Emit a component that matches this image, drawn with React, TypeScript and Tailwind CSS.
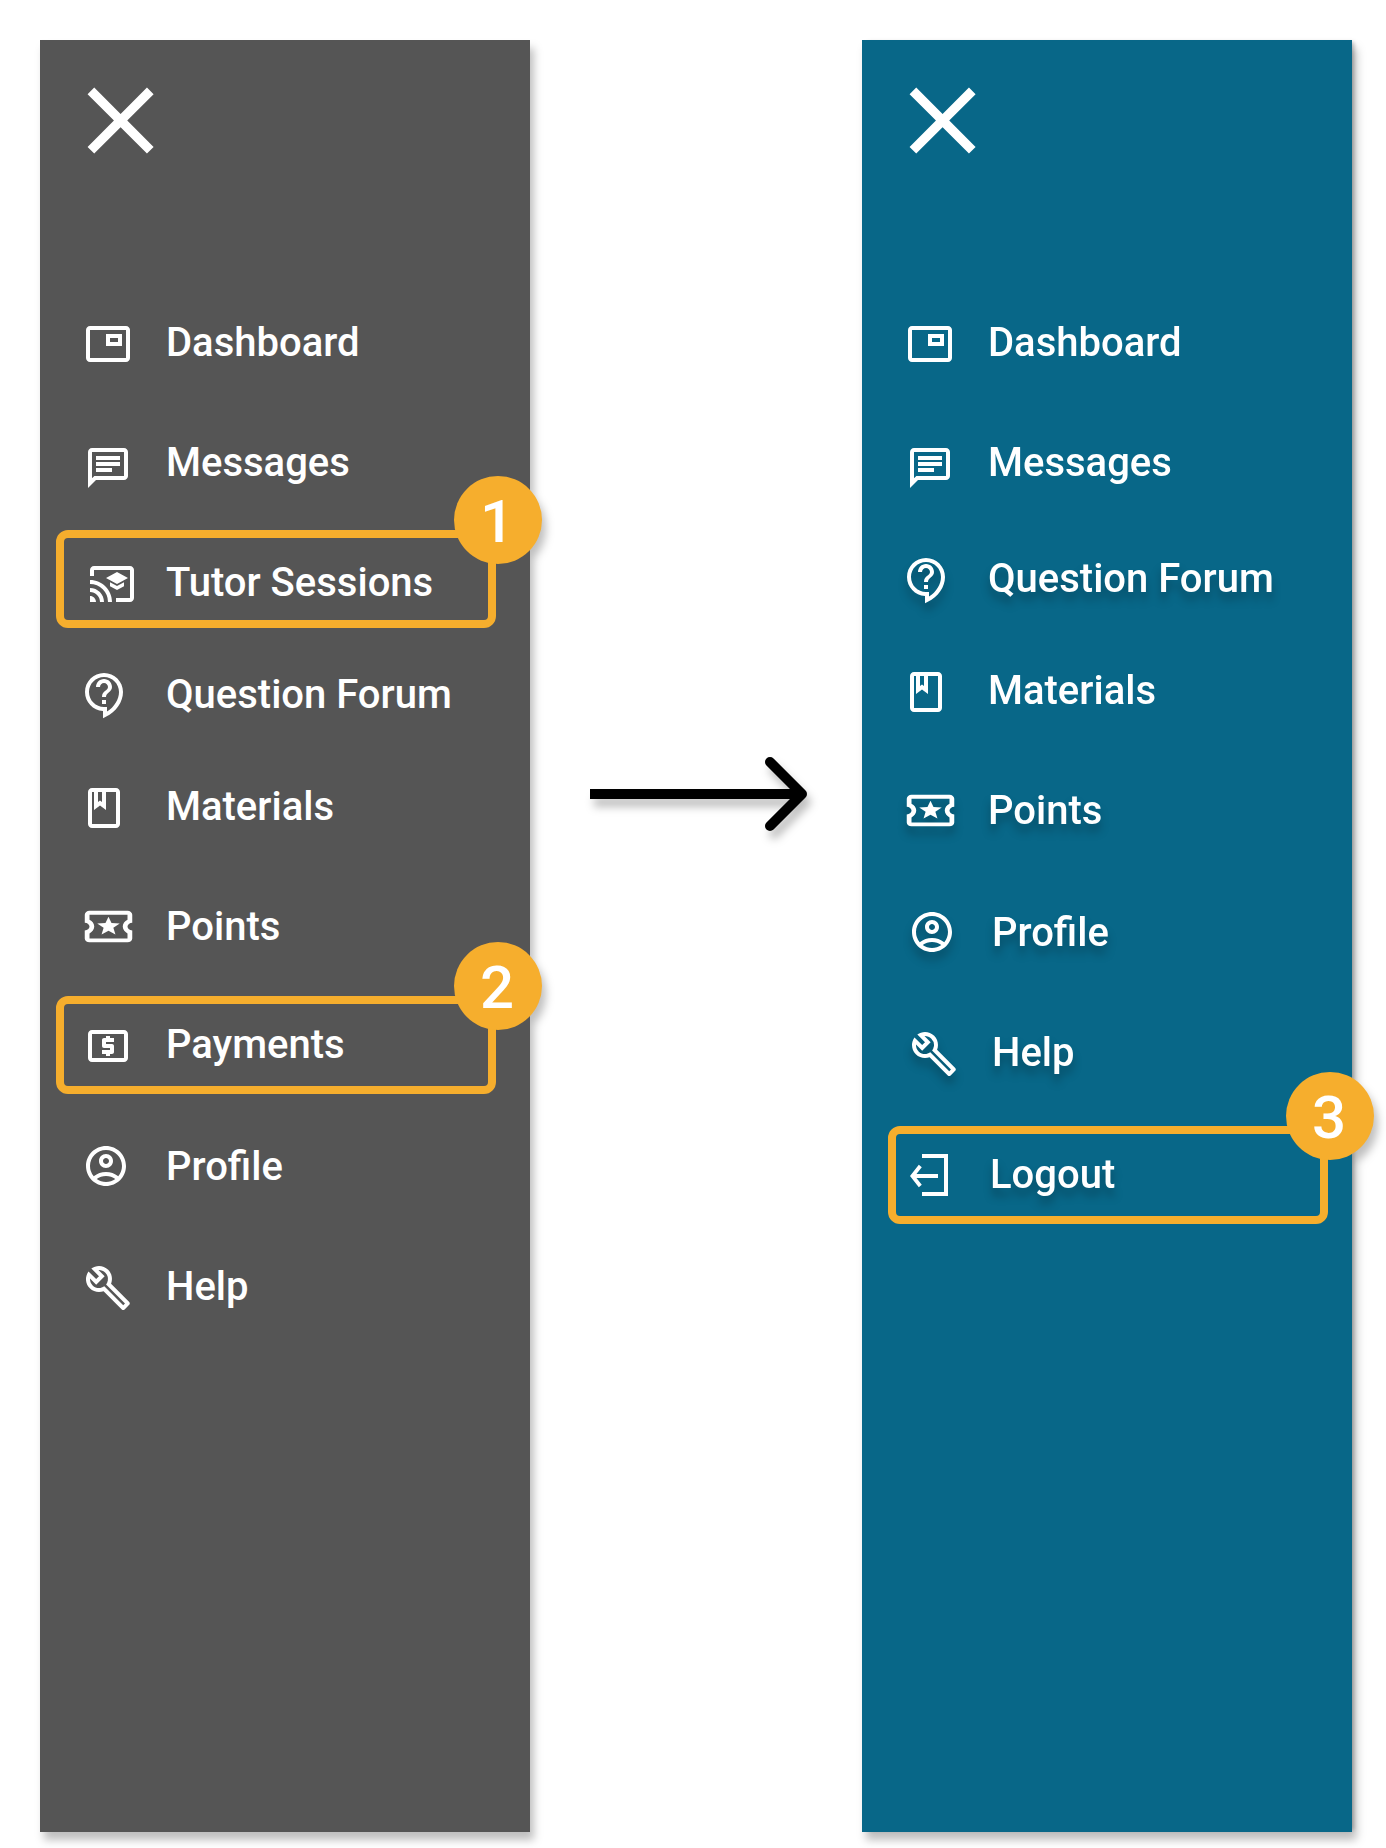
import type { ReactNode } from "react";
import {
  MdClose,
  MdOutlineAccountCircle,
  MdOutlineBuild,
  MdOutlineCastForEducation,
  MdOutlineChat,
  MdOutlineClass,
  MdOutlineContactSupport,
  MdOutlineLocalActivity,
  MdOutlineLocalAtm,
  MdOutlinePictureInPicture,
} from "react-icons/md";

type Item = {
  label: string;
  icon: ReactNode;
  row: string;
  text?: string;
  raised?: boolean;
  step?: { number: number; box: string };
};

function LogoutIcon({ className }: { className: string }) {
  return (
    <svg className={className} width="38" height="42" viewBox="0 0 38 42" fill="none" stroke="currentColor" strokeWidth="4">
      <path d="M12 2H36V40H12" />
      <path d="M28 22H3" />
      <path d="M10.3 12L2.4 22L10.3 32" strokeWidth="3.8" />
    </svg>
  );
}

function Ticket() {
  return (
    <MdOutlineLocalActivity
      preserveAspectRatio="none"
      className="ml-10 mt-[1.5px] h-[47.2px] w-[57px]"
    />
  );
}

const studentItems: Item[] = [
  { label: "Dashboard", icon: <MdOutlinePictureInPicture className="ml-11 mt-0.5 size-12" />, row: "" },
  { label: "Messages", icon: <MdOutlineChat className="ml-11 mt-1.5 size-12" />, row: "mt-[72px]" },
  {
    label: "Tutor Sessions",
    icon: <MdOutlineCastForEducation className="ml-12 mt-0.5 size-12" />,
    row: "mt-[72px]",
    step: { number: 1, box: "left-4 -top-7" },
  },
  { label: "Question Forum", icon: <MdOutlineContactSupport className="ml-[41px] mt-px size-12" />, row: "mt-16" },
  { label: "Materials", icon: <MdOutlineClass className="ml-10 mt-0.5 size-12" />, row: "mt-16" },
  { label: "Points", icon: <Ticket />, row: "mt-[72px]" },
  {
    label: "Payments",
    icon: <MdOutlineLocalAtm className="ml-11 mt-0.5 size-12" />,
    row: "mt-[70px]",
    step: { number: 2, box: "left-4 -top-6" },
  },
  { label: "Profile", icon: <MdOutlineAccountCircle className="ml-[42px] size-12" />, row: "mt-[74px]" },
  { label: "Help", icon: <MdOutlineBuild className="ml-11 mt-0.5 size-12" />, row: "mt-[72px]" },
];

const tutorItems: Item[] = [
  { label: "Dashboard", icon: <MdOutlinePictureInPicture className="ml-11 mt-0.5 size-12" />, row: "" },
  { label: "Messages", icon: <MdOutlineChat className="ml-11 mt-1.5 size-12" />, row: "mt-[72px]" },
  {
    label: "Question Forum",
    icon: <MdOutlineContactSupport className="ml-[41px] mt-0.5 size-12" />,
    row: "mt-[68px]",
    raised: true,
  },
  { label: "Materials", icon: <MdOutlineClass className="ml-10 mt-0.5 size-12" />, row: "mt-16" },
  { label: "Points", icon: <Ticket />, row: "mt-[72px]", raised: true },
  {
    label: "Profile",
    icon: <MdOutlineAccountCircle className="ml-[46px] size-12" />,
    row: "mt-[74px]",
    text: "ml-1",
    raised: true,
  },
  {
    label: "Help",
    icon: <MdOutlineBuild className="ml-12 mt-0.5 size-12" />,
    row: "mt-[72px]",
    text: "ml-1",
    raised: true,
  },
  {
    label: "Logout",
    icon: <LogoutIcon className="ml-12 mt-1" />,
    row: "mt-[74px]",
    text: "ml-0.5 [filter:drop-shadow(0_8px_4px_rgba(0,0,0,0.25))]",
    step: { number: 3, box: "left-[26px] -top-6" },
  },
];

function Step({ number, box }: { number: number; box: string }) {
  return (
    <div className={`absolute h-[98px] w-[440px] rounded-xl border-8 border-[#f6ae2d] ${box}`}>
      <div className="absolute -top-[62px] left-[390px] flex size-[88px] justify-center rounded-full bg-[#f6ae2d] pr-0.5 text-[60px] leading-[91px] font-medium">
        {number}
      </div>
    </div>
  );
}

function Menu({ items, color }: { items: Item[]; color: string }) {
  return (
    <nav
      className={`flow-root h-[1792px] w-[490px] shrink-0 text-white [filter:drop-shadow(4px_8px_4px_rgba(0,0,0,0.25))] ${color}`}
    >
      <MdClose className="mt-[24.4px] ml-[24.4px] size-[113.2px]" />
      <ul className="mt-[140.4px]">
        {items.map((item) => (
          <li
            key={item.label}
            className={`relative flex h-12 items-start ${item.row} ${
              item.raised ? "[filter:drop-shadow(0_8px_4px_rgba(0,0,0,0.25))]" : ""
            }`}
          >
            <span className="block w-[126px] shrink-0">{item.icon}</span>
            <span className={`mt-px text-[40px] leading-[48px] font-medium whitespace-nowrap ${item.text ?? ""}`}>
              {item.label}
            </span>
            {item.step && <Step number={item.step.number} box={item.step.box} />}
          </li>
        ))}
      </ul>
    </nav>
  );
}

export default function App() {
  return (
    <main className="flex h-[1848px] w-[1386px] items-start overflow-hidden bg-white pt-10 pl-10 font-['Roboto',sans-serif]">
      <Menu items={studentItems} color="bg-[#555555]" />
      <svg
        className="mt-[714px] ml-[60px] h-20 w-[217px] shrink-0 overflow-visible [filter:drop-shadow(4px_8px_4px_rgba(0,0,0,0.25))]"
        viewBox="0 0 217 80"
        fill="none"
        stroke="black"
        strokeWidth="10"
      >
        <path d="M0 40H210" />
        <path d="M180 8L212 40L180 72" strokeLinecap="round" strokeLinejoin="round" />
      </svg>
      <div className="ml-[55px]">
        <Menu items={tutorItems} color="bg-[#086788] shadow-[4px_0_4px_-2px_rgba(0,0,0,0.25)]" />
      </div>
    </main>
  );
}
